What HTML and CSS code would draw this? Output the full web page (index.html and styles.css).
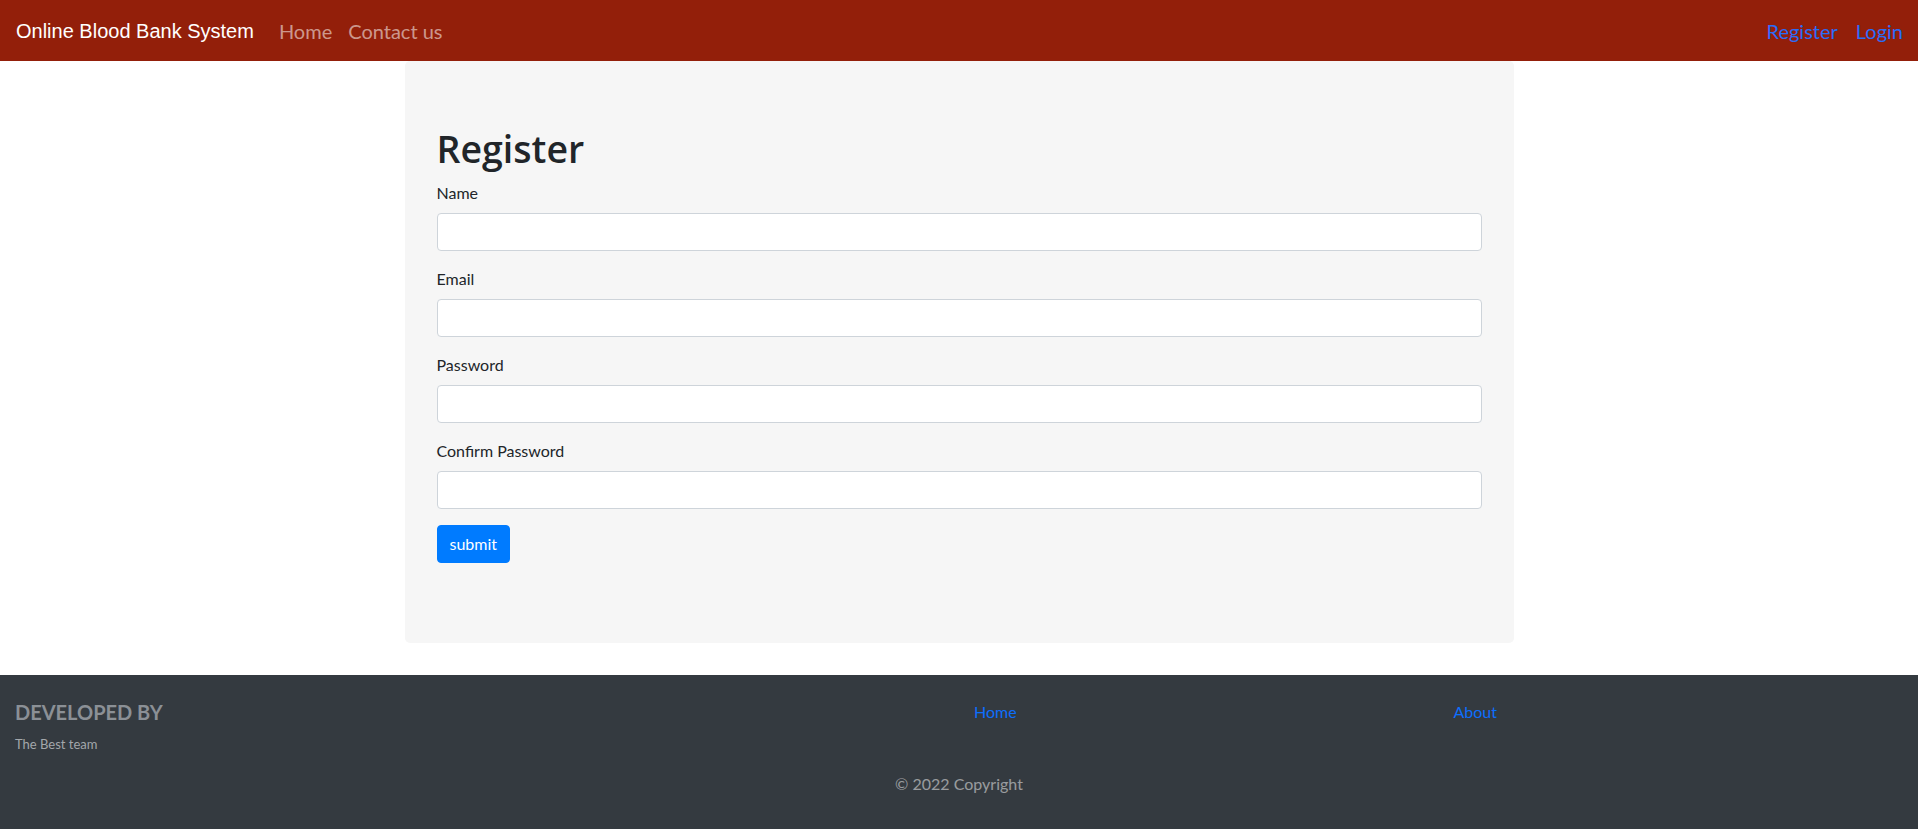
FILE: index.html
```html
<!DOCTYPE html>
<html lang="en">
<head>
<meta charset="utf-8">
<title>Online Blood Bank System - Register</title>
<link rel="stylesheet" href="styles.css">
</head>
<body>
<nav class="navbar">
  <a class="brand" href="#">Online Blood Bank System</a>
  <ul class="nav-left">
    <li><a class="nav-link" href="#">Home</a></li>
    <li><a class="nav-link" href="#">Contact us</a></li>
  </ul>
  <ul class="nav-right">
    <li><a class="nav-auth" href="#">Register</a></li>
    <li><a class="nav-auth" href="#">Login</a></li>
  </ul>
</nav>

<main class="container">
  <section class="jumbotron">
    <h1 class="title">Register</h1>
    <form class="form">
      <div class="form-group">
        <label class="label" for="name">Name</label>
        <input class="input" id="name" type="text">
      </div>
      <div class="form-group">
        <label class="label" for="email">Email</label>
        <input class="input" id="email" type="email">
      </div>
      <div class="form-group">
        <label class="label" for="password">Password</label>
        <input class="input" id="password" type="password">
      </div>
      <div class="form-group">
        <label class="label" for="confirm">Confirm Password</label>
        <input class="input" id="confirm" type="password">
      </div>
      <button class="btn" type="button">submit</button>
    </form>
  </section>
</main>

<footer class="footer">
  <div class="footer-row">
    <div class="footer-col">
      <h5 class="footer-title">DEVELOPED BY</h5>
      <p class="footer-text">The Best team</p>
    </div>
    <div class="footer-col">
      <ul class="footer-links"><li><a href="#">Home</a></li></ul>
    </div>
    <div class="footer-col">
      <ul class="footer-links"><li><a href="#">About</a></li></ul>
    </div>
  </div>
  <div class="copyright">© 2022 Copyright</div>
</footer>
</body>
</html>
```

FILE: styles.css
```css
* { box-sizing: border-box; }

html, body {
  margin: 0;
  padding: 0;
}

body {
  font-family: Lato, "Open Sans", sans-serif;
  font-size: 16px;
  line-height: 1.5;
  color: #212529;
  background: #fff;
}

ul { list-style: none; margin: 0; padding: 0; }
a { text-decoration: none; }

/* Navbar */
.navbar {
  height: 61px;
  background: #931f0a;
  display: flex;
  align-items: center;
  padding: 0 15px 0 16px;
}

.brand {
  font-family: "Liberation Sans", Arial, sans-serif;
  font-size: 20px;
  color: #fff;
  margin-right: 25px;
  line-height: 1;
}

.nav-left {
  display: flex;
  gap: 16px;
}

.nav-link {
  font-size: 20px;
  color: rgba(255, 255, 255, 0.55);
  line-height: 1.5;
}

.nav-right {
  margin-left: auto;
  display: flex;
  gap: 18px;
}

.nav-auth {
  font-size: 20px;
  color: #2a6cf8;
  line-height: 1.5;
}

/* Main */
.container {
  width: 1109px;
  margin: 0 auto;
}

.jumbotron {
  background: #f6f6f6;
  border-radius: 5px;
  padding: 64px 32px 80px;
  margin-bottom: 32px;
}

.title {
  margin: 0 0 8px;
  font-family: "Open Sans", Lato, sans-serif;
  font-size: 37.5px;
  font-weight: 600;
  line-height: 48px;
}

.form-group {
  margin-bottom: 16px;
}

.label {
  display: block;
  margin-bottom: 8px;
  line-height: 24px;
}

.input {
  display: block;
  width: 100%;
  height: 38px;
  border: 1px solid #ced4da;
  border-radius: 4px;
  background: #fff;
  padding: 6px 12px;
  font: inherit;
}

.btn {
  display: inline-block;
  height: 38px;
  padding: 6px 12px;
  border: 1px solid #007bff;
  border-radius: 4px;
  background: #007bff;
  color: #fff;
  font: inherit;
  line-height: 24px;
}

/* Footer */
.footer {
  background: #343a40;
  padding-top: 25px;
}

.footer-row {
  display: grid;
  grid-template-columns: 6fr 3fr 3fr;
  margin-bottom: 2px;
}

.footer-col {
  padding: 0 15px;
}

.footer-title {
  margin: 0 0 11px;
  font-size: 20px;
  font-weight: 700;
  line-height: 24px;
  color: #8b9096;
}

.footer-text {
  margin: 0;
  font-size: 13px;
  line-height: 19px;
  color: #a3a7ab;
}

.footer-links a {
  color: #0d6efd;
  line-height: 24px;
}

.copyright {
  text-align: center;
  padding: 16px 0 33px;
  color: rgba(255, 255, 255, 0.5);
  line-height: 24px;
}
```
